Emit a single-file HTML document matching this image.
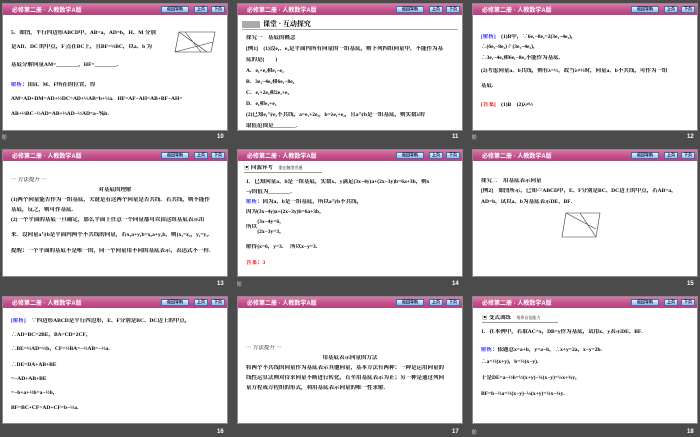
<!DOCTYPE html>
<html><head><meta charset="utf-8"><style>
*{margin:0;padding:0;box-sizing:border-box}
body{width:700px;height:437px;background:#4b4b4b;position:relative;overflow:hidden;font-family:"Liberation Serif","Noto Serif CJK SC","Noto Sans CJK SC",serif;}
.s{position:absolute;width:226px;height:128px;background:#fff;border:1px solid #8a8a8a;overflow:hidden}
.h{position:absolute;left:0;top:0;right:0;height:11px;background:linear-gradient(#d77aa8,#c04c88 60%,#b8407f);}
.h .t{position:absolute;left:9px;top:1px;font-size:6px;color:#fff;font-weight:bold;font-family:"Liberation Sans","Noto Sans CJK SC",sans-serif;white-space:nowrap}
.b{position:absolute;top:2px;height:7px;background:linear-gradient(#e8f2ff,#8fb8ea);border:1px solid #3b6fb0;font-size:4px;line-height:5px;text-align:center;color:#002;font-weight:bold;font-family:"Noto Sans CJK SC",sans-serif}
.c{position:absolute;left:8px;right:8px;font-size:5.5px;line-height:6px;color:#000;font-weight:bold;white-space:nowrap;overflow:hidden}
.n{position:absolute;color:#fff;font-size:6px;font-weight:bold;font-family:"Liberation Sans",sans-serif}
.l{position:absolute;color:#ddd;font-size:5px;font-family:"Noto Sans CJK SC",sans-serif}
.blue{color:#1a1aff}.red{color:#e00}
</style></head><body>

<div class="s" style="left:2px;top:3px">
<div class="h"><span class="t">必修第二册 · 人教数学A版</span><div class="b" style="left:158px;width:28px">返回导航</div><div class="b" style="left:191px;width:14px">上页</div><div class="b" style="left:208px;width:14px">下页</div></div>
<div class="c" style="top:26px;right:60px">5．如图，平行四边形ABCD中，AB=a，AD=b，H、M 分别</div>
<div class="c" style="top:40px;right:60px">是AD、DC 的中点，F 点在BC上，且BF=⅓BC，以a、b 为</div>
<div class="c" style="top:58px">基底分解向量AM=________，HF=________．</div>
<div class="c" style="top:78px"><span class="blue">解析：</span>由H、M、F所在的位置，得</div>
<div class="c" style="top:92px">AM=AD+DM=AD+½DC=AD+½AB=b+½a．HF=AF−AH=AB+BF−AH=</div>
<div class="c" style="top:107px">AB+⅓BC−½AD=AB+⅓AD−½AD=a−⅙b．</div>
<svg style="position:absolute;left:168px;top:24px" width="52" height="28"><g stroke="#333" stroke-width=".6" fill="none"><path d="M8 4 L44 4 L40 24 L4 24 Z M8 4 L36 24 M14 4 L30 24 M4 24 L42 14"/></g></svg>
</div>
<div class="n" style="left:217px;top:134px">10</div><div class="l" style="left:2px;top:134px">阶</div>

<div class="s" style="left:237px;top:3px">
<div class="h"><span class="t">必修第二册 · 人教数学A版</span><div class="b" style="left:158px;width:28px">返回导航</div><div class="b" style="left:191px;width:14px">上页</div><div class="b" style="left:208px;width:14px">下页</div></div>
<div style="position:absolute;left:4px;top:17px;width:18px;height:7px;background:#aaa"></div>
<div class="c" style="top:16px;left:25px;font-size:7px;line-height:9px">课堂 · 互动探究</div>
<div style="position:absolute;left:4px;right:4px;top:25px;height:1px;background:#aaa"></div>
<div class="c" style="top:31px">探究一　基底的概念</div>
<div class="c" style="top:42px">[例1]　(1)设e₁、e₂是平面内所有向量的一组基底，则下列四组向量中，不能作为基</div>
<div class="c" style="top:53px">底的是(　　)</div>
<div class="c" style="top:64px">A．e₁+e₂和e₁−e₂</div>
<div class="c" style="top:75px">B．3e₁−4e₂和6e₁−8e₂</div>
<div class="c" style="top:86px">C．e₁+2e₂和2e₁+e₂</div>
<div class="c" style="top:97px">D．e₁和e₁+e₂</div>
<div class="c" style="top:108px">(2)已知e₁与e₂不共线，a=e₁+2e₂，b=λe₁+e₂，且a与b是一组基底，则实数λ的</div>
<div class="c" style="top:119px">取值范围是________．</div>
</div>
<div class="n" style="left:452px;top:134px">11</div>

<div class="s" style="left:472px;top:3px">
<div class="h"><span class="t">必修第二册 · 人教数学A版</span><div class="b" style="left:158px;width:28px">返回导航</div><div class="b" style="left:191px;width:14px">上页</div><div class="b" style="left:208px;width:14px">下页</div></div>
<div class="c" style="top:30px"><span class="blue">[解析]</span>　(1)B中，∵6e₁−8e₂=2(3e₁−4e₂)，</div>
<div class="c" style="top:40px">∴(6e₁−8e₂)∥(3e₁−4e₂)，</div>
<div class="c" style="top:51px">∴3e₁−4e₂和6e₁−8e₂不能作为基底．</div>
<div class="c" style="top:64px">(2)考虑向量a、b共线，则有λ=½，故当λ≠½时，向量a、b不共线，可作为一组</div>
<div class="c" style="top:79px">基底．</div>
<div class="c" style="top:98px"><span class="red">[答案]</span>　(1)B　(2)λ≠½</div>
</div>
<div class="n" style="left:687px;top:134px">12</div><div class="l" style="left:472px;top:134px">阶</div>

<div class="s" style="left:2px;top:149px">
<div class="h"><span class="t">必修第二册 · 人教数学A版</span><div class="b" style="left:158px;width:28px">返回导航</div><div class="b" style="left:191px;width:14px">上页</div><div class="b" style="left:208px;width:14px">下页</div></div>
<div class="c" style="top:27px;font-weight:normal">⋯ 方法提升 ⋯</div>
<div class="c" style="top:37px;text-align:center">对基底的理解</div>
<div class="c" style="top:47px">(1)两个向量能否作为一组基底，关键是看这两个向量是否共线．若共线，则不能作</div>
<div class="c" style="top:57px">基底，反之，则可作基底．</div>
<div class="c" style="top:67px">(2)一个平面的基底一旦确定，那么平面上任意一个向量都可以由这组基底表示出</div>
<div class="c" style="top:82px">来．设向量a与b是平面内两个不共线的向量，若x₁a+y₁b=x₂a+y₂b，则{x₁=x₂，y₁=y₂．</div>
<div class="c" style="top:98px">提醒：一个平面的基底不是唯一的，同一个向量用不同的基底表示，表达式不一样．</div>
</div>
<div class="n" style="left:217px;top:281px">13</div>

<div class="s" style="left:237px;top:149px">
<div class="h"><span class="t">必修第二册 · 人教数学A版</span><div class="b" style="left:158px;width:28px">返回导航</div><div class="b" style="left:191px;width:14px">上页</div><div class="b" style="left:208px;width:14px">下页</div></div>
<div class="c" style="top:15px;left:6px">▣ 同源异考　<span style="font-weight:normal;font-size:4px">重在触类旁通</span></div>
<div style="position:absolute;left:6px;top:22px;width:78px;height:1px;background:#999"></div>
<div class="c" style="top:29px">1．已知向量a、b是一组基底，实数x、y满足(3x−4y)a+(2x−3y)b=6a+3b，则x</div>
<div class="c" style="top:39px">−y的值为________．</div>
<div class="c" style="top:49px"><span class="blue">解析：</span>因为a、b是一组基底，所以a与b不共线，</div>
<div class="c" style="top:59px">因为(3x−4y)a+(2x−3y)b=6a+3b，</div>
<div class="c" style="top:69px">　　{3x−4y=6，</div>
<div class="c" style="top:74px">所以</div>
<div class="c" style="top:79px">　　{2x−3y=3，</div>
<div class="c" style="top:94px">解得{x=6，y=3．　所以x−y=3．</div>
<div class="c red" style="top:110px">答案：3</div>
</div>
<div class="n" style="left:452px;top:281px">14</div><div class="l" style="left:237px;top:281px">阶</div>

<div class="s" style="left:472px;top:149px">
<div class="h"><span class="t">必修第二册 · 人教数学A版</span><div class="b" style="left:158px;width:28px">返回导航</div><div class="b" style="left:191px;width:14px">上页</div><div class="b" style="left:208px;width:14px">下页</div></div>
<div class="c" style="top:28px">探究二　用基底表示向量</div>
<div class="c" style="top:38px">[例2]　如图所示，已知▱ABCD中，E、F分别是BC、DC边上的中点，若AB=a，</div>
<div class="c" style="top:49px">AD=b，试以a、b为基底表示DE、BF．</div>
<svg style="position:absolute;left:85px;top:57px" width="50" height="40"><g stroke="#333" stroke-width=".6" fill="none"><path d="M8 6 L42 6 L38 30 L4 30 Z M8 6 L38 22 M22 6 L38 30"/></g></svg>
</div>
<div class="n" style="left:687px;top:281px">15</div>

<div class="s" style="left:2px;top:296px">
<div class="h"><span class="t">必修第二册 · 人教数学A版</span><div class="b" style="left:158px;width:28px">返回导航</div><div class="b" style="left:191px;width:14px">上页</div><div class="b" style="left:208px;width:14px">下页</div></div>
<div class="c" style="top:21px"><span class="blue">[解析]</span>　∵四边形ABCD是平行四边形，E、F分别是BC、DC边上的中点，</div>
<div class="c" style="top:35px">∴AD=BC=2BE，BA=CD=2CF，</div>
<div class="c" style="top:49px">∴BE=½AD=½b，CF=½BA=−½AB=−½a．</div>
<div class="c" style="top:65px">∴DE=DA+AB+BE</div>
<div class="c" style="top:79px">=−AD+AB+BE</div>
<div class="c" style="top:93px">=−b+a+½b=a−½b，</div>
<div class="c" style="top:108px">BF=BC+CF=AD+CF=b−½a．</div>
</div>
<div class="n" style="left:217px;top:429px">16</div>

<div class="s" style="left:237px;top:296px">
<div class="h"><span class="t">必修第二册 · 人教数学A版</span><div class="b" style="left:158px;width:28px">返回导航</div><div class="b" style="left:191px;width:14px">上页</div><div class="b" style="left:208px;width:14px">下页</div></div>
<div class="c" style="top:48px;font-weight:normal">⋯ 方法提升 ⋯</div>
<div class="c" style="top:58px;text-align:center">用基底表示向量的方法</div>
<div class="c" style="top:68px">将两个不共线的向量作为基底表示其他向量，基本方法有两种：一种是运用向量的</div>
<div class="c" style="top:78px">线性运算法则对待求向量不断进行转化，直至用基底表示为止；另一种是通过列向</div>
<div class="c" style="top:88px">量方程或方程组的形式，利用基底表示向量的唯一性求解．</div>
</div>
<div class="n" style="left:452px;top:429px">17</div>

<div class="s" style="left:472px;top:296px">
<div class="h"><span class="t">必修第二册 · 人教数学A版</span><div class="b" style="left:158px;width:28px">返回导航</div><div class="b" style="left:191px;width:14px">上页</div><div class="b" style="left:208px;width:14px">下页</div></div>
<div class="c" style="top:18px;left:9px">▣ 变式训练　<span style="font-weight:normal;font-size:4px">培养自信能力</span></div>
<div style="position:absolute;left:9px;top:25px;width:76px;height:1px;background:#999"></div>
<div class="c" style="top:32px">1．在本例中，若取AC=x，DB=y作为基底，试用x、y表示DE、BF．</div>
<div class="c" style="top:50px"><span class="blue">解析：</span>依题意x=a+b，y=a−b，∴x+y=2a，x−y=2b．</div>
<div class="c" style="top:62px">∴a=½(x+y)，b=½(x−y)．</div>
<div class="c" style="top:78px">于是DE=a−½b=½(x+y)−¼(x−y)=¼x+¾y，</div>
<div class="c" style="top:94px">BF=b−½a=½(x−y)−¼(x+y)=¼x−¾y．</div>
</div>
<div class="n" style="left:687px;top:429px">18</div><div class="l" style="left:472px;top:429px">阶</div>

</body></html>
